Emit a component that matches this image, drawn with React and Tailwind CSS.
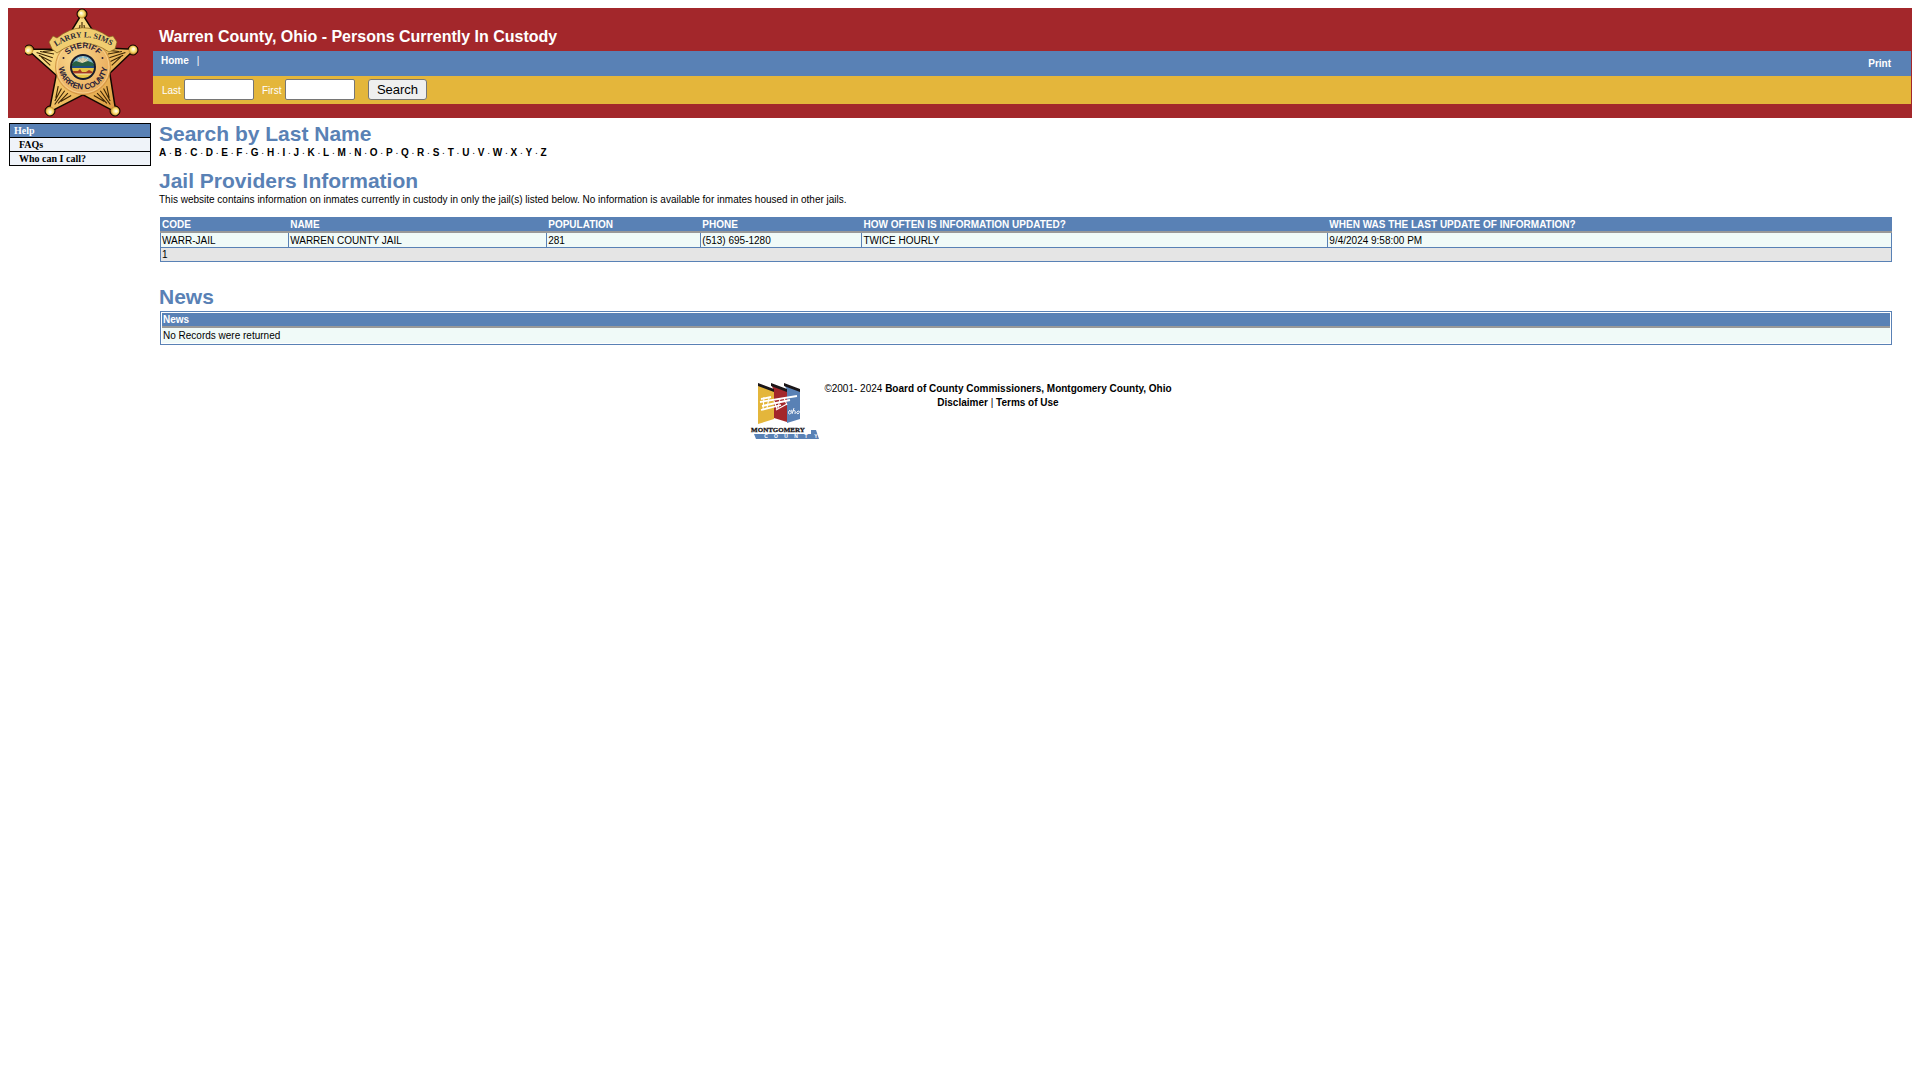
const LETTERS = "ABCDEFGHIJKLMNOPQRSTUVWXYZ".split("");

const providers = [
  {
    code: "WARR-JAIL",
    name: "WARREN COUNTY JAIL",
    population: "281",
    phone: "(513) 695-1280",
    frequency: "TWICE HOURLY",
    updated: "9/4/2024 9:58:00 PM",
  },
];

const columns = [
  { key: "code", label: "CODE", width: "w-[7.4%]" },
  { key: "name", label: "NAME", width: "w-[14.9%]" },
  { key: "population", label: "POPULATION", width: "w-[8.9%]" },
  { key: "phone", label: "PHONE", width: "w-[9.3%]" },
  { key: "frequency", label: "HOW OFTEN IS INFORMATION UPDATED?", width: "w-[26.9%]" },
  { key: "updated", label: "WHEN WAS THE LAST UPDATE OF INFORMATION?", width: "w-[32.6%]" },
];

const helpLinks = ["FAQs", "Who can I call?"];

const TIPS = [
  [82, 14, 0],
  [133, 50, 72],
  [115, 111, 144],
  [50, 111, 216],
  [29, 50, 288],
];

const SheriffBadge = () => (
  <svg viewBox="25 8 116 110" className="w-[116px] h-[110px]" role="img" aria-label="Sheriff badge">
    <defs>
      <linearGradient id="gold" x1="0" y1="0" x2="1" y2="1">
        <stop offset="0" stopColor="#fff3a0" />
        <stop offset="0.5" stopColor="#f3c76a" />
        <stop offset="1" stopColor="#d99238" />
      </linearGradient>
      <radialGradient id="face" cx="0.35" cy="0.35" r="0.75">
        <stop offset="0" stopColor="#f9d68a" />
        <stop offset="1" stopColor="#e8a95a" />
      </radialGradient>
      <radialGradient id="ball" cx="0.45" cy="0.45" r="0.6">
        <stop offset="0" stopColor="#fffde0" />
        <stop offset="0.55" stopColor="#f7d968" />
        <stop offset="1" stopColor="#a86a1c" />
      </radialGradient>
      <clipPath id="seal">
        <circle cx="83" cy="67" r="11" />
      </clipPath>
      <path id="arcBanner" d="M54 48 Q83 27 113 47" />
      <path id="arcTop" d="M64 66 A19 18 0 0 1 102 66" />
      <path id="arcBottom" d="M59 60 A24.500 24.500 0 1 0 107 60" />
    </defs>

    {/* dark edge behind the star */}
    <g fill="#120800" stroke="#120800" strokeLinejoin="round">
      <path
        d="M82 15 L96 37 L112 49 L133 50 L109 73 L115 111 L83 94 L50 111 L57 75 L29 50 L52 50 L68 38 Z"
        strokeWidth="3"
      />
      {TIPS.map(([x, y]) => (
        <circle key={x} cx={x} cy={y} r="5" />
      ))}
    </g>
    <path
      d="M82 15 L96 37 L112 49 L133 50 L109 73 L115 111 L83 94 L50 111 L57 75 L29 50 L52 50 L68 38 Z"
      fill="url(#gold)"
    />
    {TIPS.map(([x, y, angle]) => (
      <g key={angle} transform={`translate(${x} ${y}) rotate(${angle})`}>
        <path
          d="M0 8 V25 M-2 11 L-4 25 M2 11 L4 25 M-3 14 L-8 25 M3 14 L8 25"
          stroke="#3a2405"
          strokeWidth="1.1"
          fill="none"
        />
        <circle r="4.4" fill="url(#ball)" />
        <circle cx="-1" cy="-1" r="1.3" fill="#fffbe0" />
      </g>
    ))}

    <circle cx="83" cy="67" r="27.500" fill="url(#face)" stroke="#c98a38" strokeWidth="0.8" />
    <circle cx="83" cy="67" r="26" fill="none" stroke="#fbe0a0" strokeWidth="0.6" />

    <path
      d="M49 42 L53 36 L57 38 Q82 18 109 37 L113 36 L117 42 L115 49 L109 52 Q83 34 57 53 L52 49 Z"
      fill="#f0cd70"
      stroke="#85601c"
      strokeWidth="0.7"
    />
    <text className="font-['Liberation_Serif',serif] font-bold" fontSize="8" fill="#2b2a35">
      <textPath href="#arcBanner" startOffset="50%" textAnchor="middle">LARRY L. SIMS</textPath>
    </text>
    <g className="font-['Liberation_Sans',sans-serif] font-bold" fill="#2a2238">
      <text fontSize="8">
        <textPath href="#arcTop" startOffset="50%" textAnchor="middle">SHERIFF</textPath>
      </text>
      <text fontSize="8">
        <textPath href="#arcBottom" startOffset="50%" textAnchor="middle">WARREN COUNTY</textPath>
      </text>
    </g>
    <circle cx="63.500" cy="58" r="1" fill="#2a2238" />
    <circle cx="102.500" cy="58" r="1" fill="#2a2238" />

    <circle cx="83" cy="67" r="13" fill="#171b2b" />
    <g clipPath="url(#seal)">
      <rect x="70" y="54" width="26" height="10" fill="#7db8cf" />
      <path d="M77 63 a6 5 0 0 1 12 0" fill="#c9c3a4" />
      <path d="M83 63 V56 M83 63 L78 58 M83 63 L88 58" stroke="#f4e8bd" strokeWidth="0.7" />
      <path d="M70 64 L76 61 L82 63 L88 61 L96 64 V67 H70 Z" fill="#286044" />
      <rect x="70" y="66" width="26" height="2" fill="#1f4e80" />
      <rect x="70" y="68" width="26" height="12" fill="#e6c545" />
      <path d="M73 71 h5 l2 -2 2 3 h4 l3 -2 4 2 v2 H73 Z" fill="#a63a20" />
      <path d="M74 74 h18" stroke="#f7f0c2" strokeWidth="1" />
    </g>
  </svg>
);

const MontgomeryLogo = () => (
  <svg viewBox="750 383 69 58" className="w-[69px] h-[58px]" role="img" aria-label="Montgomery County">
    <path d="M758 385 L774 392 V420 L758 425 Z" fill="#e4b63b" />
    <path d="M771 385 L787 391 V423 L774 419 V392 Z" fill="#a3272b" />
    <path d="M784 385 L800 391 V420 L787 424 V391 Z" fill="#5981b5" />
    <path
      d="M758 384 L774 390 V393 L758 387 Z M771 384 L787 390 V393 L771 387 Z M784 384 L800 390 V393 L784 387 Z"
      fill="#1b1618"
    />
    <g stroke="#fff" fill="none">
      <path d="M761 400 L771 398 M760 403 L797 397 M762 407 L790 401 M761 411 L781 406" strokeWidth="1.8" />
      <path d="M764 398 l-1 13 M769 399 l-2 10 M774 402 l3 8 M780 400 l-2 9 M784 399 l3 7 M776 411 l11 -6" strokeWidth="1.1" />
      <path d="M790 411 c-3 2 -1 6 1 3 s0 -4 -1 -1 M794 409 l-2 6 m1 -3 q3 -2 2 3 m3 -3 q-3 2 0 3 q3 -3 0 -3" strokeWidth="0.9" />
    </g>
    <path d="M811 431 h5 l3 9 H756 l-2 -5 h57 Z" fill="#5981b5" />
    <text
      x="778"
      y="433"
      textAnchor="middle"
      className="font-['Liberation_Serif',serif] font-bold"
      fontSize="7"
      fill="#171418"
      stroke="#171418"
      strokeWidth="0.3"
    >
      MONTGOMERY
    </text>
    <g className="font-['Liberation_Sans',sans-serif] font-bold" fontSize="5" fill="#fff" textAnchor="middle">
      {"COUNTY".split("").map((letter, i) => (
        <text key={letter} x={766 + i * 10} y="439">{letter}</text>
      ))}
    </g>
  </svg>
);

const Heading = ({ children }) => (
  <h2 className="text-[21px] leading-6 font-bold text-[#5981b5]">{children}</h2>
);

const Header = () => (
  <header className="flex bg-[#a3272b] pr-px">
    <div className="w-[145px] shrink-0 pl-[17px]">
      <SheriffBadge />
    </div>
    <div className="flex-1 text-white">
      <h1 className="h-[43px] pt-[17px] pl-[6px] text-base font-bold leading-6">
        Warren County, Ohio - Persons Currently In Custody
      </h1>
      <nav className="flex justify-between h-[25px] pl-2 pr-5 bg-[#5981b5]">
        <div className="flex gap-2 pt-[3px] leading-[14px]">
          <a href="#home" className="font-bold">Home</a>
          <span>|</span>
        </div>
        <a href="#print" className="pt-[6px] font-bold leading-[14px]">Print</a>
      </nav>
      <form
        onSubmit={(e) => e.preventDefault()}
        className="flex items-center h-7 pl-[9px] pb-px bg-[#e4b63b]"
      >
        <label htmlFor="last" className="w-[22px] pt-[2px]">Last</label>
        <input id="last" type="text" className="w-[70px] h-[21px] px-1 bg-white border border-[#767676] rounded-xs text-black" />
        <label htmlFor="first" className="w-[23px] ml-2 pt-[2px]">First</label>
        <input id="first" type="text" className="w-[70px] h-[21px] px-1 bg-white border border-[#767676] rounded-xs text-black" />
        <button
          type="submit"
          className="w-[59px] h-[21px] ml-[13px] bg-[#efefef] border border-[#767676] rounded-[3px] text-[13px] leading-4 text-black"
        >
          Search
        </button>
      </form>
    </div>
  </header>
);

const Sidebar = () => (
  <aside className="w-[142px] shrink-0 ml-px mt-[5px] font-['Liberation_Serif',serif] font-bold">
    <div className="border border-black bg-[#5981b5] pl-1 text-white leading-[13px]">Help</div>
    <ul>
      {helpLinks.map((link) => (
        <li key={link} className="border border-t-0 border-black bg-[#eff3f9] pl-[9px] leading-[13px]">
          <a href="#help">{link}</a>
        </li>
      ))}
    </ul>
  </aside>
);

const ProvidersTable = () => (
  <table className="w-full table-fixed border-separate border-spacing-0 text-left leading-[13px]">
    <thead>
      <tr className="bg-[#5981b5] text-white">
        {columns.map((col) => (
          <th key={col.key} className={`${col.width} h-4 p-0 pl-[2px] border-b-2 border-[#999] font-bold`}>
            {col.label}
          </th>
        ))}
      </tr>
    </thead>
    <tbody>
      {providers.map((row) => (
        <tr key={row.code} className="bg-[#f0faf8]">
          {columns.map((col) => (
            <td
              key={col.key}
              className="h-[15px] p-0 pt-px pl-px border-l border-b border-[#5981b5] last:border-r"
            >
              {row[col.key]}
            </td>
          ))}
        </tr>
      ))}
      <tr className="bg-[#e5e5e5]">
        <td colSpan={6} className="p-0 pl-px border border-t-0 border-[#5981b5]">1</td>
      </tr>
    </tbody>
  </table>
);

const NewsTable = () => (
  <div className="border border-[#5981b5] p-px">
    <table className="w-full border-separate border-spacing-0 text-left leading-[13px]">
      <thead>
        <tr>
          <th className="p-0 pl-px bg-[#5981b5] border-b-2 border-[#999] text-white font-bold">News</th>
        </tr>
      </thead>
      <tbody>
        <tr>
          <td className="p-0 py-px pl-px bg-[#f0faf8]">No Records were returned</td>
        </tr>
      </tbody>
    </table>
  </div>
);

const Footer = () => (
  <footer className="flex justify-center mt-[37px] pl-[2px] gap-[5px] leading-[14px] text-center">
    <MontgomeryLogo />
    <div>
      <p>
        ©2001- 2024 <a href="#board" className="font-bold">Board of County Commissioners, Montgomery County, Ohio</a>
      </p>
      <p>
        <a href="#disclaimer" className="font-bold">Disclaimer</a> | <a href="#terms" className="font-bold">Terms of Use</a>
      </p>
    </div>
  </footer>
);

const App = () => {
  return (
    <div className="min-h-screen bg-white p-2 font-['Liberation_Sans',Arial,sans-serif] text-[10px] leading-[14px] text-black">
      <Header />
      <div className="flex">
        <Sidebar />
        <main className="flex-1 pl-2 pr-5 pt-1">
          <Heading>Search by Last Name</Heading>
          <p>
            {LETTERS.map((letter, i) => (
              <span key={letter}>
                {i > 0 && " ∙ "}
                <a href={`#${letter}`} className="font-bold">{letter}</a>
              </span>
            ))}
          </p>

          <div className="mt-[9px]">
            <Heading>Jail Providers Information</Heading>
            <p>
              This website contains information on inmates currently in custody in only the jail(s) listed below. No
              information is available for inmates housed in other jails.
            </p>
          </div>
          <div className="mt-[10px] ml-px">
            <ProvidersTable />
          </div>

          <div className="mt-[23px]">
            <Heading>News</Heading>
          </div>
          <div className="mt-[2px] ml-px">
            <NewsTable />
          </div>
        </main>
      </div>
      <Footer />
    </div>
  );
};

export default App;
